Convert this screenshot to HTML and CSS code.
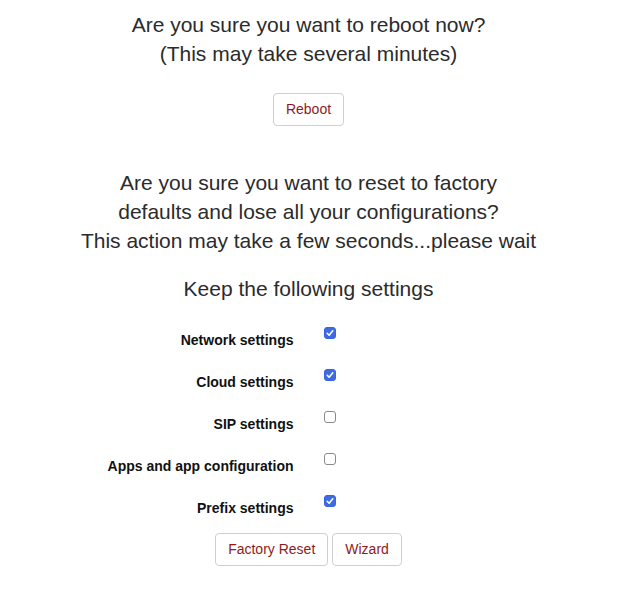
FILE: index.html
```html
<!DOCTYPE html>
<html>
<head>
<meta charset="utf-8">
<link rel="stylesheet" href="styles.css">
</head>
<body>
<div class="page">
  <section class="reboot">
    <h4 class="prompt">Are you sure you want to reboot now?<br>(This may take several minutes)</h4>
    <div class="actions actions-reboot">
      <button class="btn" type="button">Reboot</button>
    </div>
  </section>
  <section class="reset">
    <h4 class="prompt">Are you sure you want to reset to factory<br>defaults and lose all your configurations?<br>This action may take a few seconds...please wait</h4>
    <h4 class="prompt keep">Keep the following settings</h4>
    <form class="settings">
      <div class="row">
        <label class="row-label" for="c1">Network settings</label>
        <div class="row-check"><input id="c1" type="checkbox" checked></div>
      </div>
      <div class="row">
        <label class="row-label" for="c2">Cloud settings</label>
        <div class="row-check"><input id="c2" type="checkbox" checked></div>
      </div>
      <div class="row">
        <label class="row-label" for="c3">SIP settings</label>
        <div class="row-check"><input id="c3" type="checkbox"></div>
      </div>
      <div class="row">
        <label class="row-label" for="c4">Apps and app configuration</label>
        <div class="row-check"><input id="c4" type="checkbox"></div>
      </div>
      <div class="row">
        <label class="row-label" for="c5">Prefix settings</label>
        <div class="row-check"><input id="c5" type="checkbox" checked></div>
      </div>
    </form>
    <div class="actions actions-reset">
      <button class="btn" type="button">Factory Reset</button>
      <button class="btn" type="button">Wizard</button>
    </div>
  </section>
</div>
</body>
</html>
```

FILE: styles.css
```css
html, body {
  margin: 0;
  padding: 0;
  background: #fff;
}
body {
  font-family: "Liberation Sans", Arial, Helvetica, sans-serif;
  color: #333;
}
.page {
  padding-top: 10px;
}
.prompt {
  margin: 0;
  font-size: 21px;
  font-weight: normal;
  line-height: 29px;
  text-align: center;
  color: #2b2b2b;
}
.actions {
  display: flex;
  justify-content: center;
  gap: 4px;
}
.actions-reboot {
  margin-top: 25px;
}
.reset {
  margin-top: 42px;
}
.keep {
  margin-top: 19px;
}
.settings {
  margin-top: 14px;
}
.row {
  display: flex;
  height: 42px;
}
.row-label {
  width: 50%;
  box-sizing: border-box;
  padding-right: 15px;
  padding-top: 14px;
  text-align: right;
  font-size: 14px;
  font-weight: bold;
  line-height: 18px;
  color: #111;
}
.row-check {
  width: 50%;
  box-sizing: border-box;
  padding-left: 15px;
  padding-top: 10px;
}
.row-check input {
  appearance: none;
  -webkit-appearance: none;
  display: block;
  margin: 0;
  width: 12px;
  height: 12px;
  box-sizing: border-box;
  border: 1px solid #8a8a8a;
  border-radius: 3px;
  background: #fff;
}
.row-check input:checked {
  border-color: #3a63e0;
  background: #3e6ae3 url("data:image/svg+xml;utf8,<svg xmlns='http://www.w3.org/2000/svg' viewBox='0 0 12 12'><path d='M3.2 6.3 L5.1 8.2 L8.8 3.8' fill='none' stroke='white' stroke-width='1.6' stroke-linecap='round' stroke-linejoin='round'/></svg>") center / 12px 12px no-repeat;
}
.actions-reset {
  margin-top: 6px;
}
.btn {
  font-family: "Liberation Sans", Arial, Helvetica, sans-serif;
  font-size: 14px;
  line-height: 19px;
  padding: 6px 12px;
  color: #8e1b1b;
  background: #fff;
  border: 1px solid #cfcfcf;
  border-radius: 4px;
}
```
